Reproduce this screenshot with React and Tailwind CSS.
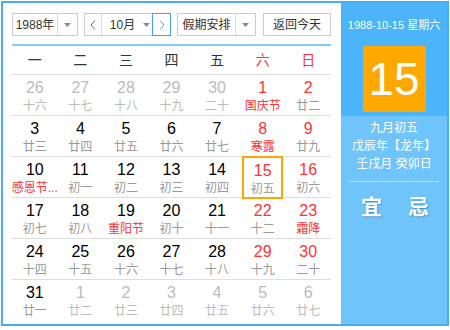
import React from "react";

const rows = [
  [["26", "十六", "o"], ["27", "十七", "o"], ["28", "十八", "o"], ["29", "十九", "o"], ["30", "二十", "o"], ["1", "国庆节", "h"], ["2", "廿二"]],
  [["3", "廿三"], ["4", "廿四"], ["5", "廿五"], ["6", "廿六"], ["7", "廿七"], ["8", "寒露", "h"], ["9", "廿九"]],
  [["10", "感恩节...", "h"], ["11", "初一"], ["12", "初二"], ["13", "初三"], ["14", "初四"], ["15", "初五", "s"], ["16", "初六"]],
  [["17", "初七"], ["18", "初八"], ["19", "重阳节", "h"], ["20", "初十"], ["21", "十一"], ["22", "十二"], ["23", "霜降", "h"]],
  [["24", "十四"], ["25", "十五"], ["26", "十六"], ["27", "十七"], ["28", "十八"], ["29", "十九"], ["30", "二十"]],
  [["31", "廿一"], ["1", "廿二", "o"], ["2", "廿三", "o"], ["3", "廿四", "o"], ["4", "廿五", "o"], ["5", "廿六", "o"], ["6", "廿七", "o"]],
];

const weekdays = ["一", "二", "三", "四", "五", "六", "日"];

function Caret() {
  return (
    <svg width="7" height="4" viewBox="0 0 7 4">
      <path d="M0 0h7L3.5 4z" fill="#8a8a8a" />
    </svg>
  );
}

function Chevron({ dir, color }) {
  return (
    <svg width="6" height="10" viewBox="0 0 6 10">
      <path
        d={dir === "left" ? "M5 0.5L1 5l4 4.5" : "M1 0.5L5 5l-4 4.5"}
        fill="none"
        stroke={color}
        strokeWidth="1"
      />
    </svg>
  );
}

function DayCell({ day, lunar, kind, col }) {
  const weekend = col >= 5;
  let numColor = "text-black";
  if (kind === "o") numColor = "text-[#bbbbbb]";
  else if (weekend) numColor = "text-[#ff3333]";
  let lunarColor = "text-[#999999]";
  if (kind === "o") lunarColor = "text-[#bbbbbb]";
  if (kind === "h") lunarColor = "text-[#ff3333]";

  return (
    <div className="flex h-full items-stretch justify-center">
      <div
        className={
          "flex w-full flex-col items-center pt-[4px] " +
          (kind === "s" ? "mx-[2px] -mt-[1px] mb-[1px] border-2 border-[#ffa500] pt-[3px]" : "")
        }
      >
        <span className={"text-[16px] leading-[18px] " + numColor}>{day}</span>
        <span className={"mt-[1px] whitespace-nowrap text-[12px] leading-[16px] " + lunarColor}>{lunar}</span>
      </div>
    </div>
  );
}

export default function App() {
  return (
    <div className="h-[330px] w-[450px] bg-white pl-[1px] pt-[1px] font-['Liberation_Sans','Noto_Sans_CJK_SC',sans-serif]">
      <div className="flex h-[325px] w-[448px] border-2 border-[#48acf3]">
        {/* left calendar */}
        <div className="w-[338px] pl-[9px] pr-[7px] pt-[10px]">
          <div className="flex h-[23px] text-[12px] text-[#333333]">
            <div className="flex w-[66px] border border-[#cccccc]">
              <div className="flex w-[45px] items-center justify-center border-r border-[#dddddd]">1988年</div>
              <div className="flex flex-1 items-center justify-center">
                <Caret />
              </div>
            </div>
            <div className="ml-[6px] flex w-[87px] border border-[#cccccc]">
              <div className="flex w-[17px] items-center justify-center border-r border-[#dddddd]">
                <Chevron dir="left" color="#666666" />
              </div>
              <div className="flex w-[50px] items-center justify-center gap-[8px] pl-[6px]">
                <span>10月</span>
                <Caret />
              </div>
              <div className="-my-[1px] -mr-[1px] flex flex-1 items-center justify-center border border-[#3fa2ef]">
                <Chevron dir="right" color="#3fa2ef" />
              </div>
            </div>
            <div className="ml-[6px] flex w-[79px] border border-[#cccccc]">
              <div className="flex w-[58px] items-center justify-center border-r border-[#dddddd]">假期安排</div>
              <div className="flex flex-1 items-center justify-center">
                <Caret />
              </div>
            </div>
            <div className="ml-[7px] flex w-[68px] items-center justify-center border border-[#cccccc]">返回今天</div>
          </div>

          <div className="mt-[8px] h-[2px] w-[319px] bg-[#86cbf5]" />

          <div className="grid h-[29px] w-[319px] grid-cols-7 border-b border-[#dddddd] text-[14px]">
            {weekdays.map((w, i) => (
              <div
                key={w}
                className={"flex items-center justify-center " + (i >= 5 ? "text-[#ff3333]" : "text-[#333333]")}
              >
                {w}
              </div>
            ))}
          </div>

          {rows.map((row, r) => (
            <div
              key={r}
              className={
                "grid h-[41px] w-[319px] grid-cols-7 " + (r < rows.length - 1 ? "border-b border-[#dddddd]" : "")
              }
            >
              {row.map(([d, l, k], c) => (
                <DayCell key={c} day={d} lunar={l} kind={k} col={c} />
              ))}
            </div>
          ))}
        </div>

        {/* right panel */}
        <div className="flex flex-1 flex-col bg-[#6fc4fc] text-white">
          <div className="flex h-[113px] flex-col items-center bg-[#4bb4fa] pt-[14px]">
            <div className="text-[11px] leading-[16px]">1988-10-15 星期六</div>
            <div className="mt-[13px] flex h-[66px] w-[63px] items-center justify-center rounded-[2px] bg-[#ffa800] text-[46px] leading-none">
              15
            </div>
          </div>
          <div className="flex flex-col items-center pt-[3px] text-[12px] leading-[18px]">
            <div>九月初五</div>
            <div>戊辰年【龙年】</div>
            <div>壬戌月 癸卯日</div>
          </div>
          <div className="mx-[8px] mt-[8px] h-[1px] bg-[#b4e0fd]" />
          <div className="mt-[13px] flex justify-center gap-[26px] pl-[2px] text-[21px] font-bold leading-[24px] [text-shadow:1px_1px_1px_#3b8fd6]">
            <span>宜</span>
            <span>忌</span>
          </div>
        </div>
      </div>
    </div>
  );
}
